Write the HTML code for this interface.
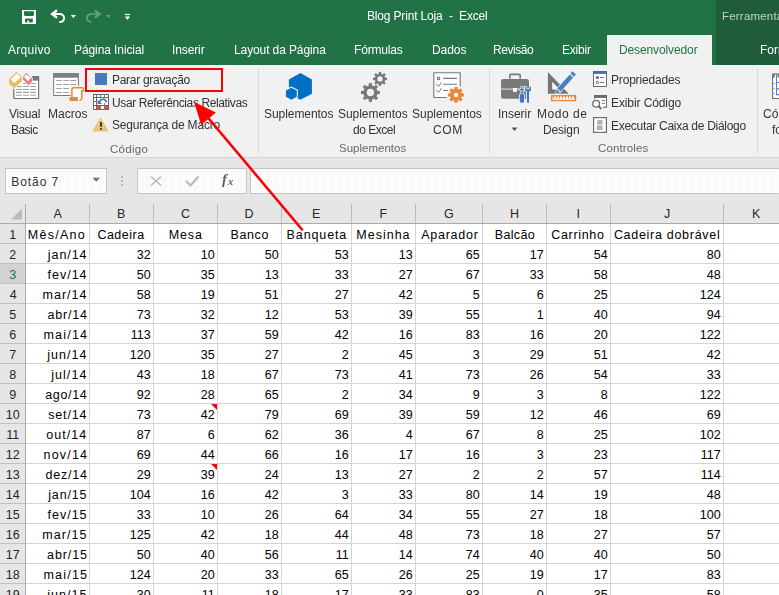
<!DOCTYPE html>
<html><head><meta charset="utf-8"><style>
html,body{margin:0;padding:0;}
body{width:779px;height:595px;overflow:hidden;position:relative;background:#fff;font-family:"Liberation Sans", sans-serif;}
body>div{position:absolute;box-sizing:content-box;}
.t{white-space:pre;line-height:1px;height:1px;}
.g{will-change:transform;}
</style></head><body>
<div style="left:0px;top:0px;width:779px;height:65px;background:#217346;"></div>
<div style="left:716px;top:0px;width:63px;height:65px;background:#1e5c3a;"></div>
<div style="left:607px;top:35px;width:105px;height:30px;background:#f1f1f1;"></div>
<svg style="position:absolute;left:15px;top:5px" width="125" height="25" viewBox="15 5 125 25">
<rect x="22" y="10" width="14" height="14" fill="#fff"/>
<path d="M24 11.2 H34 V15 L33 16 H25 L24 15 Z" fill="#217346"/>
<rect x="25" y="18.6" width="7.8" height="3.8" fill="#217346"/>
<rect x="27.2" y="20.6" width="1.9" height="1.8" fill="#fff"/>
<path d="M57 10.3 L52.2 14 L57 17.7" fill="none" stroke="#fff" stroke-width="2.4"/>
<path d="M52.5 14 H59.5 C65.5 14 65.8 21.8 59.3 22" fill="none" stroke="#fff" stroke-width="1.9"/>
<path d="M70.8 15 H76 L73.4 18 Z" fill="#fff"/>
<g opacity="0.3">
<path d="M94.8 10.6 L99.6 14.1 L94.8 17.6" fill="none" stroke="#fff" stroke-width="2.4"/>
<path d="M99.3 14.1 H91.5 C85.5 14.1 85.2 21.8 91.5 21.9" fill="none" stroke="#fff" stroke-width="1.9"/>
<path d="M106 15 H111 L108.5 18 Z" fill="#fff"/>
</g>
<rect x="124.8" y="13.9" width="5.3" height="1.2" fill="#fff"/>
<path d="M124.8 16.6 H130.1 L127.45 20.1 Z" fill="#fff"/>
</svg>
<div class="t g" style="left:366.70px;top:15.95px;font-size:12px;color:#ffffff;letter-spacing:-0.167px;">Blog Print Loja  -  Excel</div>
<div class="t g" style="left:721.60px;top:15.95px;font-size:11.5px;color:#c2d6c8;letter-spacing:0.200px;">Ferramentas de Desenho</div>
<div class="t g" style="left:8.00px;top:49.95px;font-size:12px;color:#ffffff;letter-spacing:0.283px;">Arquivo</div>
<div class="t g" style="left:73.70px;top:49.95px;font-size:12px;color:#ffffff;letter-spacing:-0.092px;">Página Inicial</div>
<div class="t g" style="left:172.40px;top:49.95px;font-size:12px;color:#ffffff;letter-spacing:-0.117px;">Inserir</div>
<div class="t g" style="left:233.50px;top:49.95px;font-size:12px;color:#ffffff;letter-spacing:-0.107px;">Layout da Página</div>
<div class="t g" style="left:354.00px;top:49.95px;font-size:12px;color:#ffffff;letter-spacing:-0.186px;">Fórmulas</div>
<div class="t g" style="left:431.50px;top:49.95px;font-size:12px;color:#ffffff;letter-spacing:-0.075px;">Dados</div>
<div class="t g" style="left:493.20px;top:49.95px;font-size:12px;color:#ffffff;letter-spacing:-0.433px;">Revisão</div>
<div class="t g" style="left:562.00px;top:49.95px;font-size:12px;color:#ffffff;letter-spacing:-0.200px;">Exibir</div>
<div class="t g" style="left:619.40px;top:49.95px;font-size:12px;color:#217346;letter-spacing:-0.117px;">Desenvolvedor</div>
<div class="t g" style="left:760.40px;top:49.95px;font-size:12px;color:#ffffff;">Formatar</div>
<div style="left:0px;top:65px;width:779px;height:92px;background:#f1f1f1;"></div>
<div style="left:0px;top:157px;width:779px;height:1px;background:#d4d4d4;"></div>
<div style="left:0px;top:158px;width:779px;height:46px;background:#e6e6e6;"></div>
<div style="left:258px;top:69px;width:1px;height:84px;background:#d8d8d8;"></div>
<div style="left:489px;top:69px;width:1px;height:84px;background:#d8d8d8;"></div>
<div style="left:757px;top:69px;width:1px;height:84px;background:#d8d8d8;"></div>
<svg style="position:absolute;left:5px;top:68px" width="38" height="34" viewBox="5 68 38 34">
<path d="M13.9 88.8 V98.5 H38.6 V76.7 H32.3" fill="#fff" stroke="#707070" stroke-width="1"/>
<path d="M13.9 80 H32.3 V76.7 H38.6 V98.5 H13.9 Z" fill="#fff"/>
<path d="M13.9 88.8 V98.5 H38.6 V76.7 H32.3" fill="none" stroke="#707070" stroke-width="1"/>
<rect x="32.3" y="76.2" width="6.8" height="4.4" fill="#787878"/>
<g stroke="#a0a0a0" stroke-width="1.1">
<path d="M23.1 83.5h5.8 M30.1 83.5h5.8 M16 86.5h5.9 M23.1 86.5h5.8 M30.1 86.5h5.8 M16 89.5h5.9 M23.1 89.5h5.8 M30.1 89.5h5.8 M16 92.4h5.9 M23.1 92.4h5.8 M30.1 92.4h5.8 M16 95.3h5.9 M23.1 95.3h5.8 M30.1 95.3h5.8"/>
</g>
<path d="M16.5 72 L21.9 77 V81.3 L14.6 88 L9.1 84.3 V79.1 Z" fill="#e8bc66" stroke="#f4f4f4" stroke-width="1.2" paint-order="stroke"/>
<path d="M16.5 73.6 L20.8 77.3 L14.3 82.9 L10.6 79.4 Z" fill="#fff"/>
<path d="M26.3 73.1 L32.1 78.6 V81.6 L28.5 85.3 L23.1 79.4 V76.7 Z" fill="#e17b8e" stroke="#f4f4f4" stroke-width="1.2" paint-order="stroke"/>
<path d="M26.3 74.6 L31 78.1 L27.8 81.3 L24 76.7 Z" fill="#fff"/>
</svg>
<div class="t g" style="left:9.00px;top:113.95px;font-size:12px;color:#333333;letter-spacing:-0.200px;">Visual</div>
<div class="t g" style="left:10.50px;top:129.95px;font-size:12px;color:#333333;letter-spacing:-0.550px;">Basic</div>
<svg style="position:absolute;left:48px;top:68px" width="40" height="36" viewBox="48 68 40 36">
<rect x="53.7" y="73.7" width="24.7" height="21.8" fill="#fff" stroke="#7a7a7a" stroke-width="1"/>
<rect x="53.2" y="73.2" width="25.7" height="4.5" fill="#7f7f7f"/>
<g stroke="#a0a0a0" stroke-width="1.1">
<path d="M56.2 80.5h5.6 M63.2 80.5h5.7 M70.1 80.5h5.9 M56.2 84.5h5.6 M63.2 84.5h5.7 M70.1 84.5h5.9 M56.2 88.5h5.6 M63.2 88.5h5.7 M56.2 92.5h5.6 M63.2 92.5h5.7"/>
</g>
<path d="M70.5 86 H83 Q85 86 85 89 V92 H82.5 V101.8 H68.5 V96 H70.5 Z" fill="#f4f4f4"/>
<path d="M71.9 97.5 V89.5 Q71.9 87.7 73.7 87.7 H82 Q84 87.7 83.3 90.7 H81.8 V98.5 Q81.5 100.2 79.5 100.2" fill="#fff" stroke="#e8883a" stroke-width="1.5"/>
<path d="M70.7 97 H77.9 V100.9 H70.7 Q69.2 100.9 69.2 99 Q69.2 97 70.7 97 Z" fill="#e8883a"/>
</svg>
<div class="t g" style="left:47.70px;top:113.95px;font-size:12px;color:#333333;letter-spacing:0.040px;">Macros</div>
<div style="left:85px;top:68px;width:134px;height:20px;border:2px solid #ff0000;"></div>
<div style="left:95px;top:73px;width:12px;height:12px;background:#4a7ab5;"></div>
<div class="t g" style="left:111.50px;top:79.95px;font-size:12px;color:#333333;letter-spacing:-0.292px;">Parar gravação</div>
<svg style="position:absolute;left:91px;top:92px" width="20" height="20" viewBox="91 92 20 20">
<rect x="93.5" y="94.5" width="15" height="15" fill="#fff" stroke="#666" stroke-width="1"/>
<path d="M93 97.5 H109 M96.5 94 V110 M93 105.5 H109" stroke="#666" stroke-width="1"/>
<path d="M100.5 94 V98.5 M104.5 94 V98.5 M93 101.5 H96 M100.5 106 V110 M104.5 103 V110" stroke="#7a7a7a" stroke-width="1"/>
<rect x="97" y="106" width="3" height="3" fill="#e0502a"/>
<rect x="105" y="106" width="3" height="3" fill="#e0502a"/>
<path d="M106.4 102.5 C105.8 98.6 101.5 98 98.8 102.4" stroke="#3c78c0" stroke-width="1.5" fill="none"/>
<path d="M97.6 99.6 V104 H102 Z" fill="#3c78c0"/>
</svg>
<div class="t g" style="left:111.50px;top:102.95px;font-size:12px;color:#333333;letter-spacing:-0.388px;">Usar Referências Relativas</div>
<svg style="position:absolute;left:90px;top:115px" width="22" height="20" viewBox="90 115 22 20">
<path d="M100.5 118.6 L107.8 131 H93.2 Z" fill="#eec27a" stroke="#eec27a" stroke-width="1.2" stroke-linejoin="round"/>
<rect x="100" y="122" width="2" height="4.8" fill="#3a3f4a"/>
<rect x="100" y="128.2" width="2" height="1.7" fill="#3a3f4a"/>
</svg>
<div class="t g" style="left:111.50px;top:124.95px;font-size:12px;color:#333333;letter-spacing:-0.188px;">Segurança de Macro</div>
<div class="t g" style="left:109.60px;top:148.95px;font-size:11.5px;color:#666666;letter-spacing:0.300px;">Código</div>
<svg style="position:absolute;left:280px;top:70px" width="36" height="34" viewBox="280 70 36 34">
<path d="M300.4 73.1 L311.9 79.5 V93.7 L300.4 99.8 L288.9 93.7 V79.5 Z" fill="#0070c6"/>
<path d="M291.4 87.7 L296.8 90.4 V96.8 L291.4 99.8 L285.9 96.8 V90.4 Z" fill="#0070c6" stroke="#f4f4f4" stroke-width="2.2" paint-order="stroke"/>
</svg>
<div class="t g" style="left:264.40px;top:113.95px;font-size:12px;color:#333333;letter-spacing:-0.060px;">Suplementos</div>
<svg style="position:absolute;left:355px;top:68px" width="40" height="40" viewBox="355 68 40 40"><g fill="#787878"><circle cx="370.4" cy="92.5" r="7.2"/><rect x="368.85" y="83.10" width="3.10" height="3.70" transform="rotate(0 370.4 92.5)"/><rect x="368.85" y="83.10" width="3.10" height="3.70" transform="rotate(45 370.4 92.5)"/><rect x="368.85" y="83.10" width="3.10" height="3.70" transform="rotate(90 370.4 92.5)"/><rect x="368.85" y="83.10" width="3.10" height="3.70" transform="rotate(135 370.4 92.5)"/><rect x="368.85" y="83.10" width="3.10" height="3.70" transform="rotate(180 370.4 92.5)"/><rect x="368.85" y="83.10" width="3.10" height="3.70" transform="rotate(225 370.4 92.5)"/><rect x="368.85" y="83.10" width="3.10" height="3.70" transform="rotate(270 370.4 92.5)"/><rect x="368.85" y="83.10" width="3.10" height="3.70" transform="rotate(315 370.4 92.5)"/></g><circle cx="370.4" cy="92.5" r="3.7" fill="#f1f1f1"/><g fill="#787878"><circle cx="380" cy="78.9" r="5.2"/><rect x="378.75" y="71.90" width="2.50" height="3.30" transform="rotate(0 380 78.9)"/><rect x="378.75" y="71.90" width="2.50" height="3.30" transform="rotate(45 380 78.9)"/><rect x="378.75" y="71.90" width="2.50" height="3.30" transform="rotate(90 380 78.9)"/><rect x="378.75" y="71.90" width="2.50" height="3.30" transform="rotate(135 380 78.9)"/><rect x="378.75" y="71.90" width="2.50" height="3.30" transform="rotate(180 380 78.9)"/><rect x="378.75" y="71.90" width="2.50" height="3.30" transform="rotate(225 380 78.9)"/><rect x="378.75" y="71.90" width="2.50" height="3.30" transform="rotate(270 380 78.9)"/><rect x="378.75" y="71.90" width="2.50" height="3.30" transform="rotate(315 380 78.9)"/></g><circle cx="380" cy="78.9" r="2.7" fill="#f1f1f1"/></svg>
<div class="t g" style="left:338.20px;top:113.95px;font-size:12px;color:#333333;letter-spacing:-0.040px;">Suplementos</div>
<div class="t g" style="left:352.50px;top:129.95px;font-size:12px;color:#333333;letter-spacing:-0.471px;">do Excel</div>
<svg style="position:absolute;left:428px;top:68px" width="44" height="36" viewBox="428 68 44 36">
<path d="M446.8 97.5 H433.8 V72.7 H460.2 V86.5" fill="#fff" stroke="#777" stroke-width="1.1"/>
<rect x="437.4" y="77.4" width="2.2" height="2.2" fill="none" stroke="#777" stroke-width="1"/>
<path d="M443.1 78.4h13.8 M443.1 84.3h13.8 M443.1 90.5h5.8" stroke="#777" stroke-width="1.1"/>
<path d="M436.3 83.8 l2.2 2.6 l3 -4.2 M436.3 89.8 l2.2 2.6 l3 -4.2" stroke="#777" stroke-width="1" fill="none"/>
<g fill="#f8f8f8" stroke="#f8f8f8" stroke-width="2.4"><circle cx="456" cy="94.9" r="6.1"/><rect x="454.35" y="87.00" width="3.30" height="3.30" transform="rotate(0 456 94.9)"/><rect x="454.35" y="87.00" width="3.30" height="3.30" transform="rotate(45 456 94.9)"/><rect x="454.35" y="87.00" width="3.30" height="3.30" transform="rotate(90 456 94.9)"/><rect x="454.35" y="87.00" width="3.30" height="3.30" transform="rotate(135 456 94.9)"/><rect x="454.35" y="87.00" width="3.30" height="3.30" transform="rotate(180 456 94.9)"/><rect x="454.35" y="87.00" width="3.30" height="3.30" transform="rotate(225 456 94.9)"/><rect x="454.35" y="87.00" width="3.30" height="3.30" transform="rotate(270 456 94.9)"/><rect x="454.35" y="87.00" width="3.30" height="3.30" transform="rotate(315 456 94.9)"/></g><g fill="#e8883a"><circle cx="456" cy="94.9" r="6.1"/><rect x="454.35" y="87.00" width="3.30" height="3.30" transform="rotate(0 456 94.9)"/><rect x="454.35" y="87.00" width="3.30" height="3.30" transform="rotate(45 456 94.9)"/><rect x="454.35" y="87.00" width="3.30" height="3.30" transform="rotate(90 456 94.9)"/><rect x="454.35" y="87.00" width="3.30" height="3.30" transform="rotate(135 456 94.9)"/><rect x="454.35" y="87.00" width="3.30" height="3.30" transform="rotate(180 456 94.9)"/><rect x="454.35" y="87.00" width="3.30" height="3.30" transform="rotate(225 456 94.9)"/><rect x="454.35" y="87.00" width="3.30" height="3.30" transform="rotate(270 456 94.9)"/><rect x="454.35" y="87.00" width="3.30" height="3.30" transform="rotate(315 456 94.9)"/></g><circle cx="456" cy="94.9" r="2.2" fill="#fff"/></svg>
<div class="t g" style="left:411.90px;top:113.95px;font-size:12px;color:#333333;letter-spacing:-0.020px;">Suplementos</div>
<div class="t g" style="left:433.30px;top:129.95px;font-size:12px;color:#333333;letter-spacing:0.650px;">COM</div>
<div class="t g" style="left:339.30px;top:147.95px;font-size:11.5px;color:#666666;letter-spacing:0.010px;">Suplementos</div>
<svg style="position:absolute;left:496px;top:70px" width="40" height="36" viewBox="496 70 40 36">
<path d="M509.8 78.8 V75.6 Q509.8 74.4 511 74.4 H519 Q520.2 74.4 520.2 75.6 V78.8" fill="none" stroke="#7a7a7a" stroke-width="1.6"/>
<rect x="501" y="79" width="28" height="19.7" rx="2.2" fill="#7a7a7a"/>
<rect x="501" y="88.6" width="18" height="0.9" fill="#f1f1f1"/>
<rect x="513" y="88" width="4" height="3.8" fill="#fff"/>
<g stroke="#f4f4f4" stroke-width="1.6" paint-order="stroke" fill="#3c78c0" stroke-linejoin="round">
<path d="M521.3 86.8 H522.7 V89 H524 V90 H522.7 V94.2 H523 Q524.2 94.2 524.2 95.5 V101.3 Q524.2 102.7 522.8 102.7 H521.2 Q519.8 102.7 519.8 101.3 V95.5 Q519.8 94.2 521 94.2 H521.3 V90 H520 V89 H521.3 Z"/>
<path d="M525 86.8 H526.3 V89.2 H529.7 V86.8 H531 V89.8 Q531 91.2 529 91.6 V102.7 H527 V91.6 Q525 91.2 525 89.8 Z"/>
</g>
</svg>
<div class="t g" style="left:498.30px;top:113.95px;font-size:12px;color:#333333;letter-spacing:-0.017px;">Inserir</div>
<svg style="position:absolute;left:511px;top:127px" width="8" height="5" viewBox="0 0 8 5"><path d="M0.5 0.5 L6.5 0.5 L3.5 4 Z" fill="#555"/></svg>
<svg style="position:absolute;left:544px;top:68px" width="40" height="36" viewBox="544 68 40 36">
<path d="M547.9 71.9 V93.7 H568.8 Z" fill="#767676"/>
<path d="M552.2 81.8 V89.5 H559.5 Z" fill="#f8f8f8"/>
<g stroke="#f1f1f1" stroke-width="1.2" paint-order="stroke" fill="#4a7fc0">
<polygon points="555.90,93.50 560.01,92.33 556.57,89.28"/><polygon points="560.67,91.59 573.22,77.45 569.78,74.39 557.23,88.53"/><polygon points="573.95,76.63 575.95,74.38 572.51,71.33 570.51,73.57"/>
</g>
<rect x="551.7" y="95.7" width="23.8" height="4.8" fill="#fff" stroke="#e8883a" stroke-width="1.4"/>
<path d="M553.5 95.5v3 M556.5 95.5v3 M559.5 95.5v3 M562.5 95.5v3 M565.5 95.5v3 M568.5 95.5v3 M571.5 95.5v3 M574.5 95.5v3" stroke="#e8883a" stroke-width="1.1"/>
</svg>
<div class="t g" style="left:537.30px;top:113.95px;font-size:12px;color:#333333;letter-spacing:0.533px;">Modo de</div>
<div class="t g" style="left:543.30px;top:129.95px;font-size:12px;color:#333333;letter-spacing:-0.160px;">Design</div>
<svg style="position:absolute;left:590px;top:68px" width="20" height="22" viewBox="590 68 20 22">
<rect x="593.5" y="71.5" width="13" height="15" fill="#fff" stroke="#6b6b6b" stroke-width="1"/>
<rect x="593" y="71" width="14" height="2.9" fill="#3d72b5"/>
<circle cx="597.4" cy="77.5" r="1.6" fill="#666"/>
<circle cx="597.4" cy="82.5" r="1.3" fill="none" stroke="#666" stroke-width="1"/>
<path d="M600.1 77.5h3.8 M600.1 82.5h3.8" stroke="#666" stroke-width="1.1"/>
</svg>
<div class="t g" style="left:610.60px;top:79.95px;font-size:12px;color:#333333;letter-spacing:-0.182px;">Propriedades</div>
<svg style="position:absolute;left:589px;top:92px" width="21" height="20" viewBox="589 92 21 20">
<path d="M594.5 98.7 V95.5 H606.5 V107.2 H603.1" fill="#fff" stroke="#6b6b6b" stroke-width="1"/>
<path d="M594.5 98.7 V95.5 H606.5 V107.2 H595 Z" fill="#fff"/>
<path d="M594.5 98.7 V95.5 H606.5 V107.2 H603.1" fill="none" stroke="#6b6b6b" stroke-width="1"/>
<rect x="594" y="95" width="13" height="2.9" fill="#6b6b6b"/>
<path d="M601.9 100.5h3 M601.9 103.3h3" stroke="#777" stroke-width="1"/>
<circle cx="596.1" cy="103.7" r="3.4" fill="none" stroke="#f4f4f4" stroke-width="3"/>
<path d="M598.9 106.5 L601.3 109" stroke="#f4f4f4" stroke-width="3.5"/>
<circle cx="596.1" cy="103.7" r="3.4" fill="#fff" stroke="#6b6b6b" stroke-width="1.3"/>
<path d="M598.7 106.3 L601.3 109" stroke="#6b6b6b" stroke-width="2"/>
</svg>
<div class="t g" style="left:610.60px;top:102.95px;font-size:12px;color:#333333;letter-spacing:-0.100px;">Exibir Código</div>
<svg style="position:absolute;left:590px;top:114px" width="20" height="22" viewBox="590 114 20 22">
<rect x="593.6" y="117.6" width="12.8" height="14.8" fill="#fff" stroke="#6b6b6b" stroke-width="1.2"/>
<path d="M597.5 120 H602.5 V130 H596.5 Z" fill="#b0b0b0"/>
<rect x="596.8" y="124.5" width="6" height="0.9" fill="#fff"/>
<path d="M600 117.6 v1.2 M600 131.2 v1.2" stroke="#fff" stroke-width="1"/>
</svg>
<div class="t g" style="left:610.60px;top:125.95px;font-size:12px;color:#333333;letter-spacing:-0.292px;">Executar Caixa de Diálogo</div>
<div class="t g" style="left:597.70px;top:147.95px;font-size:11.5px;color:#666666;letter-spacing:0.138px;">Controles</div>
<svg style="position:absolute;left:768px;top:70px" width="11" height="32" viewBox="768 70 11 32">
<rect x="772.6" y="74" width="10" height="24.5" fill="#fff" stroke="#707070" stroke-width="1.1"/>
<rect x="772.2" y="74" width="2.6" height="3.6" fill="#777"/>
<rect x="777.6" y="74" width="3" height="3.6" fill="#777"/>
<path d="M776.5 74 V94.6 H781 M776.5 82.5 H781 M776.5 88.9 H781" stroke="#4a86c8" stroke-width="1.1" fill="none"/>
<path d="M773.3 83.5h1.6 M773.3 88.5h1.6 M773.3 93.5h1.6" stroke="#999" stroke-width="0.9"/>
</svg>
<div class="t g" style="left:763.30px;top:113.95px;font-size:12px;color:#333333;">Có</div>
<div class="t g" style="left:772.30px;top:129.95px;font-size:12px;color:#333333;">fo</div>
<div style="left:5px;top:168px;width:100px;height:24px;background:repeating-conic-gradient(#f7f7f7 0 25%,#ffffff 0 50%) 0 0/2px 2px;border:1px solid #c6c6c6;"></div>
<div class="t" style="left:11.20px;top:181.95px;font-size:12px;color:#333;letter-spacing:0.950px;">Botão 7</div>
<svg style="position:absolute;left:92px;top:177px" width="9" height="6" viewBox="0 0 9 6"><path d="M0.5 0.8 L8 0.8 L4.25 4.8 Z" fill="#707070"/></svg>
<div style="left:121px;top:175.5px;width:2px;height:2px;background:#b8b8b8;"></div>
<div style="left:121px;top:179.5px;width:2px;height:2px;background:#b8b8b8;"></div>
<div style="left:121px;top:183.5px;width:2px;height:2px;background:#b8b8b8;"></div>
<div style="left:137px;top:168px;width:108px;height:24px;background:repeating-conic-gradient(#f7f7f7 0 25%,#ffffff 0 50%) 0 0/2px 2px;border:1px solid #c6c6c6;"></div>
<div style="left:250px;top:168px;width:540px;height:24px;background:repeating-conic-gradient(#f7f7f7 0 25%,#ffffff 0 50%) 0 0/2px 2px;border:1px solid #c6c6c6;"></div>
<svg style="position:absolute;left:149px;top:175px" width="14" height="12" viewBox="0 0 14 12"><path d="M2 1.5 L12 10.5 M12 1.5 L2 10.5" stroke="#b9b9b9" stroke-width="1.6"/></svg>
<svg style="position:absolute;left:184px;top:175px" width="16" height="12" viewBox="0 0 16 12"><path d="M2 6 L6.5 10.5 L14.5 1.5" stroke="#b9b9b9" stroke-width="2.2" fill="none"/></svg>
<div class="t g" style="left:222.00px;top:178.95px;font-size:15px;color:#606060;font-family:'Liberation Serif';font-style:italic;font-weight:bold;">f</div>
<div class="t g" style="left:227.60px;top:180.95px;font-size:10.5px;color:#606060;font-family:'Liberation Serif';font-style:italic;font-weight:bold;">x</div>
<div style="left:0px;top:204px;width:779px;height:19px;background:#e6e6e6;"></div>
<div style="left:0px;top:224px;width:25px;height:371px;background:#e6e6e6;"></div>
<div style="left:0px;top:264px;width:25px;height:19px;background:#d2d2d2;"></div>
<div style="left:26px;top:224px;width:753px;height:371px;background:#ffffff;"></div>
<div style="left:26px;top:243px;width:753px;height:1px;background:#d4d4d4;"></div>
<div style="left:0px;top:243px;width:25px;height:1px;background:#c0c0c0;"></div>
<div style="left:26px;top:263px;width:753px;height:1px;background:#d4d4d4;"></div>
<div style="left:0px;top:263px;width:25px;height:1px;background:#c0c0c0;"></div>
<div style="left:26px;top:283px;width:753px;height:1px;background:#d4d4d4;"></div>
<div style="left:0px;top:283px;width:25px;height:1px;background:#c0c0c0;"></div>
<div style="left:26px;top:303px;width:753px;height:1px;background:#d4d4d4;"></div>
<div style="left:0px;top:303px;width:25px;height:1px;background:#c0c0c0;"></div>
<div style="left:26px;top:323px;width:753px;height:1px;background:#d4d4d4;"></div>
<div style="left:0px;top:323px;width:25px;height:1px;background:#c0c0c0;"></div>
<div style="left:26px;top:343px;width:753px;height:1px;background:#d4d4d4;"></div>
<div style="left:0px;top:343px;width:25px;height:1px;background:#c0c0c0;"></div>
<div style="left:26px;top:363px;width:753px;height:1px;background:#d4d4d4;"></div>
<div style="left:0px;top:363px;width:25px;height:1px;background:#c0c0c0;"></div>
<div style="left:26px;top:383px;width:753px;height:1px;background:#d4d4d4;"></div>
<div style="left:0px;top:383px;width:25px;height:1px;background:#c0c0c0;"></div>
<div style="left:26px;top:403px;width:753px;height:1px;background:#d4d4d4;"></div>
<div style="left:0px;top:403px;width:25px;height:1px;background:#c0c0c0;"></div>
<div style="left:26px;top:423px;width:753px;height:1px;background:#d4d4d4;"></div>
<div style="left:0px;top:423px;width:25px;height:1px;background:#c0c0c0;"></div>
<div style="left:26px;top:443px;width:753px;height:1px;background:#d4d4d4;"></div>
<div style="left:0px;top:443px;width:25px;height:1px;background:#c0c0c0;"></div>
<div style="left:26px;top:463px;width:753px;height:1px;background:#d4d4d4;"></div>
<div style="left:0px;top:463px;width:25px;height:1px;background:#c0c0c0;"></div>
<div style="left:26px;top:483px;width:753px;height:1px;background:#d4d4d4;"></div>
<div style="left:0px;top:483px;width:25px;height:1px;background:#c0c0c0;"></div>
<div style="left:26px;top:503px;width:753px;height:1px;background:#d4d4d4;"></div>
<div style="left:0px;top:503px;width:25px;height:1px;background:#c0c0c0;"></div>
<div style="left:26px;top:523px;width:753px;height:1px;background:#d4d4d4;"></div>
<div style="left:0px;top:523px;width:25px;height:1px;background:#c0c0c0;"></div>
<div style="left:26px;top:543px;width:753px;height:1px;background:#d4d4d4;"></div>
<div style="left:0px;top:543px;width:25px;height:1px;background:#c0c0c0;"></div>
<div style="left:26px;top:563px;width:753px;height:1px;background:#d4d4d4;"></div>
<div style="left:0px;top:563px;width:25px;height:1px;background:#c0c0c0;"></div>
<div style="left:26px;top:583px;width:753px;height:1px;background:#d4d4d4;"></div>
<div style="left:0px;top:583px;width:25px;height:1px;background:#c0c0c0;"></div>
<div style="left:26px;top:603px;width:753px;height:1px;background:#d4d4d4;"></div>
<div style="left:0px;top:603px;width:25px;height:1px;background:#c0c0c0;"></div>
<div style="left:0px;top:223px;width:779px;height:1px;background:#ababab;"></div>
<div style="left:89px;top:224px;width:1px;height:371px;background:#d4d4d4;"></div>
<div style="left:89px;top:204px;width:1px;height:19px;background:#bdbdbd;"></div>
<div style="left:153px;top:224px;width:1px;height:371px;background:#d4d4d4;"></div>
<div style="left:153px;top:204px;width:1px;height:19px;background:#bdbdbd;"></div>
<div style="left:217px;top:224px;width:1px;height:371px;background:#d4d4d4;"></div>
<div style="left:217px;top:204px;width:1px;height:19px;background:#bdbdbd;"></div>
<div style="left:281px;top:224px;width:1px;height:371px;background:#d4d4d4;"></div>
<div style="left:281px;top:204px;width:1px;height:19px;background:#bdbdbd;"></div>
<div style="left:351px;top:224px;width:1px;height:371px;background:#d4d4d4;"></div>
<div style="left:351px;top:204px;width:1px;height:19px;background:#bdbdbd;"></div>
<div style="left:415px;top:224px;width:1px;height:371px;background:#d4d4d4;"></div>
<div style="left:415px;top:204px;width:1px;height:19px;background:#bdbdbd;"></div>
<div style="left:482px;top:224px;width:1px;height:371px;background:#d4d4d4;"></div>
<div style="left:482px;top:204px;width:1px;height:19px;background:#bdbdbd;"></div>
<div style="left:546px;top:224px;width:1px;height:371px;background:#d4d4d4;"></div>
<div style="left:546px;top:204px;width:1px;height:19px;background:#bdbdbd;"></div>
<div style="left:610px;top:224px;width:1px;height:371px;background:#d4d4d4;"></div>
<div style="left:610px;top:204px;width:1px;height:19px;background:#bdbdbd;"></div>
<div style="left:723px;top:224px;width:1px;height:371px;background:#d4d4d4;"></div>
<div style="left:723px;top:204px;width:1px;height:19px;background:#bdbdbd;"></div>
<div style="left:25px;top:204px;width:1px;height:391px;background:#ababab;"></div>
<svg style="position:absolute;left:8px;top:207px" width="16" height="14" viewBox="0 0 16 14"><path d="M14 1.5 L14 12.5 L3 12.5 Z" fill="#bcbcbc"/></svg>
<div class="t" style="left:53.50px;top:213.95px;font-size:12.5px;color:#262626;">A</div>
<div class="t" style="left:117.00px;top:213.95px;font-size:12.5px;color:#262626;">B</div>
<div class="t" style="left:181.00px;top:213.95px;font-size:12.5px;color:#262626;">C</div>
<div class="t" style="left:244.50px;top:213.95px;font-size:12.5px;color:#262626;">D</div>
<div class="t" style="left:312.00px;top:213.95px;font-size:12.5px;color:#262626;">E</div>
<div class="t" style="left:379.50px;top:213.95px;font-size:12.5px;color:#262626;">F</div>
<div class="t" style="left:444.00px;top:213.95px;font-size:12.5px;color:#262626;">G</div>
<div class="t" style="left:510.00px;top:213.95px;font-size:12.5px;color:#262626;">H</div>
<div class="t" style="left:576.50px;top:213.95px;font-size:12.5px;color:#262626;">I</div>
<div class="t" style="left:664.00px;top:213.95px;font-size:12.5px;color:#262626;">J</div>
<div class="t" style="left:752.00px;top:213.95px;font-size:12.5px;color:#262626;">K</div>
<div class="t" style="left:9.30px;top:234.95px;font-size:12.5px;color:#262626;">1</div>
<div class="t" style="left:27.75px;top:234.95px;font-size:12.5px;color:#000;letter-spacing:1.283px;">Mês/Ano</div>
<div class="t" style="left:97.40px;top:234.95px;font-size:12.5px;color:#000;letter-spacing:0.500px;">Cadeira</div>
<div class="t" style="left:168.80px;top:234.95px;font-size:12.5px;color:#000;letter-spacing:0.833px;">Mesa</div>
<div class="t" style="left:230.50px;top:234.95px;font-size:12.5px;color:#000;letter-spacing:0.600px;">Banco</div>
<div class="t" style="left:286.60px;top:234.95px;font-size:12.5px;color:#000;letter-spacing:0.886px;">Banqueta</div>
<div class="t" style="left:356.30px;top:234.95px;font-size:12.5px;color:#000;letter-spacing:1.000px;">Mesinha</div>
<div class="t" style="left:421.30px;top:234.95px;font-size:12.5px;color:#000;letter-spacing:0.729px;">Aparador</div>
<div class="t" style="left:494.70px;top:234.95px;font-size:12.5px;color:#000;letter-spacing:0.360px;">Balcão</div>
<div class="t" style="left:551.30px;top:234.95px;font-size:12.5px;color:#000;letter-spacing:0.671px;">Carrinho</div>
<div class="t" style="left:613.90px;top:234.95px;font-size:12.5px;color:#000;letter-spacing:0.707px;">Cadeira dobrável</div>
<div class="t" style="left:9.30px;top:254.95px;font-size:12.5px;color:#262626;">2</div>
<div class="t" style="left:47.80px;top:254.95px;font-size:12.5px;color:#000;letter-spacing:0.940px;">jan/14</div>
<div class="t" style="left:136.75px;top:254.95px;font-size:12.5px;color:#000;">32</div>
<div class="t" style="left:200.75px;top:254.95px;font-size:12.5px;color:#000;">10</div>
<div class="t" style="left:264.75px;top:254.95px;font-size:12.5px;color:#000;">50</div>
<div class="t" style="left:334.75px;top:254.95px;font-size:12.5px;color:#000;">53</div>
<div class="t" style="left:398.75px;top:254.95px;font-size:12.5px;color:#000;">13</div>
<div class="t" style="left:465.75px;top:254.95px;font-size:12.5px;color:#000;">65</div>
<div class="t" style="left:529.75px;top:254.95px;font-size:12.5px;color:#000;">17</div>
<div class="t" style="left:593.75px;top:254.95px;font-size:12.5px;color:#000;">54</div>
<div class="t" style="left:706.75px;top:254.95px;font-size:12.5px;color:#000;">80</div>
<div class="t" style="left:9.30px;top:274.95px;font-size:12.5px;color:#217346;">3</div>
<div class="t" style="left:47.50px;top:274.95px;font-size:12.5px;color:#000;letter-spacing:1.000px;">fev/14</div>
<div class="t" style="left:136.75px;top:274.95px;font-size:12.5px;color:#000;">50</div>
<div class="t" style="left:200.75px;top:274.95px;font-size:12.5px;color:#000;">35</div>
<div class="t" style="left:264.75px;top:274.95px;font-size:12.5px;color:#000;">13</div>
<div class="t" style="left:334.75px;top:274.95px;font-size:12.5px;color:#000;">33</div>
<div class="t" style="left:398.75px;top:274.95px;font-size:12.5px;color:#000;">27</div>
<div class="t" style="left:465.75px;top:274.95px;font-size:12.5px;color:#000;">67</div>
<div class="t" style="left:529.75px;top:274.95px;font-size:12.5px;color:#000;">33</div>
<div class="t" style="left:593.75px;top:274.95px;font-size:12.5px;color:#000;">58</div>
<div class="t" style="left:706.75px;top:274.95px;font-size:12.5px;color:#000;">48</div>
<div class="t" style="left:9.80px;top:294.95px;font-size:12.5px;color:#262626;">4</div>
<div class="t" style="left:42.60px;top:294.95px;font-size:12.5px;color:#000;letter-spacing:0.980px;">mar/14</div>
<div class="t" style="left:136.75px;top:294.95px;font-size:12.5px;color:#000;">58</div>
<div class="t" style="left:200.75px;top:294.95px;font-size:12.5px;color:#000;">19</div>
<div class="t" style="left:264.75px;top:294.95px;font-size:12.5px;color:#000;">51</div>
<div class="t" style="left:334.75px;top:294.95px;font-size:12.5px;color:#000;">27</div>
<div class="t" style="left:398.75px;top:294.95px;font-size:12.5px;color:#000;">42</div>
<div class="t" style="left:472.75px;top:294.95px;font-size:12.5px;color:#000;">5</div>
<div class="t" style="left:536.75px;top:294.95px;font-size:12.5px;color:#000;">6</div>
<div class="t" style="left:593.75px;top:294.95px;font-size:12.5px;color:#000;">25</div>
<div class="t" style="left:699.75px;top:294.95px;font-size:12.5px;color:#000;">124</div>
<div class="t" style="left:9.30px;top:314.95px;font-size:12.5px;color:#262626;">5</div>
<div class="t" style="left:47.50px;top:314.95px;font-size:12.5px;color:#000;letter-spacing:0.800px;">abr/14</div>
<div class="t" style="left:136.75px;top:314.95px;font-size:12.5px;color:#000;">73</div>
<div class="t" style="left:200.75px;top:314.95px;font-size:12.5px;color:#000;">32</div>
<div class="t" style="left:264.75px;top:314.95px;font-size:12.5px;color:#000;">12</div>
<div class="t" style="left:334.75px;top:314.95px;font-size:12.5px;color:#000;">53</div>
<div class="t" style="left:398.75px;top:314.95px;font-size:12.5px;color:#000;">39</div>
<div class="t" style="left:465.75px;top:314.95px;font-size:12.5px;color:#000;">55</div>
<div class="t" style="left:536.75px;top:314.95px;font-size:12.5px;color:#000;">1</div>
<div class="t" style="left:593.75px;top:314.95px;font-size:12.5px;color:#000;">40</div>
<div class="t" style="left:706.75px;top:314.95px;font-size:12.5px;color:#000;">94</div>
<div class="t" style="left:9.30px;top:334.95px;font-size:12.5px;color:#262626;">6</div>
<div class="t" style="left:43.50px;top:334.95px;font-size:12.5px;color:#000;letter-spacing:1.200px;">mai/14</div>
<div class="t" style="left:130.75px;top:334.95px;font-size:12.5px;color:#000;">113</div>
<div class="t" style="left:200.75px;top:334.95px;font-size:12.5px;color:#000;">37</div>
<div class="t" style="left:264.75px;top:334.95px;font-size:12.5px;color:#000;">59</div>
<div class="t" style="left:334.75px;top:334.95px;font-size:12.5px;color:#000;">42</div>
<div class="t" style="left:398.75px;top:334.95px;font-size:12.5px;color:#000;">16</div>
<div class="t" style="left:465.75px;top:334.95px;font-size:12.5px;color:#000;">83</div>
<div class="t" style="left:529.75px;top:334.95px;font-size:12.5px;color:#000;">16</div>
<div class="t" style="left:593.75px;top:334.95px;font-size:12.5px;color:#000;">20</div>
<div class="t" style="left:699.75px;top:334.95px;font-size:12.5px;color:#000;">122</div>
<div class="t" style="left:9.30px;top:354.95px;font-size:12.5px;color:#262626;">7</div>
<div class="t" style="left:47.20px;top:354.95px;font-size:12.5px;color:#000;letter-spacing:1.060px;">jun/14</div>
<div class="t" style="left:129.75px;top:354.95px;font-size:12.5px;color:#000;">120</div>
<div class="t" style="left:200.75px;top:354.95px;font-size:12.5px;color:#000;">35</div>
<div class="t" style="left:264.75px;top:354.95px;font-size:12.5px;color:#000;">27</div>
<div class="t" style="left:341.75px;top:354.95px;font-size:12.5px;color:#000;">2</div>
<div class="t" style="left:398.75px;top:354.95px;font-size:12.5px;color:#000;">45</div>
<div class="t" style="left:472.75px;top:354.95px;font-size:12.5px;color:#000;">3</div>
<div class="t" style="left:529.75px;top:354.95px;font-size:12.5px;color:#000;">29</div>
<div class="t" style="left:593.75px;top:354.95px;font-size:12.5px;color:#000;">51</div>
<div class="t" style="left:706.75px;top:354.95px;font-size:12.5px;color:#000;">42</div>
<div class="t" style="left:9.30px;top:374.95px;font-size:12.5px;color:#262626;">8</div>
<div class="t" style="left:51.20px;top:374.95px;font-size:12.5px;color:#000;letter-spacing:1.060px;">jul/14</div>
<div class="t" style="left:136.75px;top:374.95px;font-size:12.5px;color:#000;">43</div>
<div class="t" style="left:200.75px;top:374.95px;font-size:12.5px;color:#000;">18</div>
<div class="t" style="left:264.75px;top:374.95px;font-size:12.5px;color:#000;">67</div>
<div class="t" style="left:334.75px;top:374.95px;font-size:12.5px;color:#000;">73</div>
<div class="t" style="left:398.75px;top:374.95px;font-size:12.5px;color:#000;">41</div>
<div class="t" style="left:465.75px;top:374.95px;font-size:12.5px;color:#000;">73</div>
<div class="t" style="left:529.75px;top:374.95px;font-size:12.5px;color:#000;">26</div>
<div class="t" style="left:593.75px;top:374.95px;font-size:12.5px;color:#000;">54</div>
<div class="t" style="left:706.75px;top:374.95px;font-size:12.5px;color:#000;">33</div>
<div class="t" style="left:9.30px;top:394.95px;font-size:12.5px;color:#262626;">9</div>
<div class="t" style="left:45.20px;top:394.95px;font-size:12.5px;color:#000;letter-spacing:0.660px;">ago/14</div>
<div class="t" style="left:136.75px;top:394.95px;font-size:12.5px;color:#000;">92</div>
<div class="t" style="left:200.75px;top:394.95px;font-size:12.5px;color:#000;">28</div>
<div class="t" style="left:264.75px;top:394.95px;font-size:12.5px;color:#000;">65</div>
<div class="t" style="left:341.75px;top:394.95px;font-size:12.5px;color:#000;">2</div>
<div class="t" style="left:398.75px;top:394.95px;font-size:12.5px;color:#000;">34</div>
<div class="t" style="left:472.75px;top:394.95px;font-size:12.5px;color:#000;">9</div>
<div class="t" style="left:536.75px;top:394.95px;font-size:12.5px;color:#000;">3</div>
<div class="t" style="left:600.75px;top:394.95px;font-size:12.5px;color:#000;">8</div>
<div class="t" style="left:699.75px;top:394.95px;font-size:12.5px;color:#000;">122</div>
<div class="t" style="left:5.80px;top:414.95px;font-size:12.5px;color:#262626;">10</div>
<div class="t" style="left:48.20px;top:414.95px;font-size:12.5px;color:#000;letter-spacing:0.860px;">set/14</div>
<div class="t" style="left:136.75px;top:414.95px;font-size:12.5px;color:#000;">73</div>
<div class="t" style="left:200.75px;top:414.95px;font-size:12.5px;color:#000;">42</div>
<div class="t" style="left:264.75px;top:414.95px;font-size:12.5px;color:#000;">79</div>
<div class="t" style="left:334.75px;top:414.95px;font-size:12.5px;color:#000;">69</div>
<div class="t" style="left:398.75px;top:414.95px;font-size:12.5px;color:#000;">39</div>
<div class="t" style="left:465.75px;top:414.95px;font-size:12.5px;color:#000;">59</div>
<div class="t" style="left:529.75px;top:414.95px;font-size:12.5px;color:#000;">12</div>
<div class="t" style="left:593.75px;top:414.95px;font-size:12.5px;color:#000;">46</div>
<div class="t" style="left:706.75px;top:414.95px;font-size:12.5px;color:#000;">69</div>
<div class="t" style="left:6.30px;top:434.95px;font-size:12.5px;color:#262626;">11</div>
<div class="t" style="left:46.20px;top:434.95px;font-size:12.5px;color:#000;letter-spacing:1.060px;">out/14</div>
<div class="t" style="left:136.75px;top:434.95px;font-size:12.5px;color:#000;">87</div>
<div class="t" style="left:207.75px;top:434.95px;font-size:12.5px;color:#000;">6</div>
<div class="t" style="left:264.75px;top:434.95px;font-size:12.5px;color:#000;">62</div>
<div class="t" style="left:334.75px;top:434.95px;font-size:12.5px;color:#000;">36</div>
<div class="t" style="left:405.75px;top:434.95px;font-size:12.5px;color:#000;">4</div>
<div class="t" style="left:465.75px;top:434.95px;font-size:12.5px;color:#000;">67</div>
<div class="t" style="left:536.75px;top:434.95px;font-size:12.5px;color:#000;">8</div>
<div class="t" style="left:593.75px;top:434.95px;font-size:12.5px;color:#000;">25</div>
<div class="t" style="left:699.75px;top:434.95px;font-size:12.5px;color:#000;">102</div>
<div class="t" style="left:5.80px;top:454.95px;font-size:12.5px;color:#262626;">12</div>
<div class="t" style="left:43.60px;top:454.95px;font-size:12.5px;color:#000;letter-spacing:1.180px;">nov/14</div>
<div class="t" style="left:136.75px;top:454.95px;font-size:12.5px;color:#000;">69</div>
<div class="t" style="left:200.75px;top:454.95px;font-size:12.5px;color:#000;">44</div>
<div class="t" style="left:264.75px;top:454.95px;font-size:12.5px;color:#000;">66</div>
<div class="t" style="left:334.75px;top:454.95px;font-size:12.5px;color:#000;">16</div>
<div class="t" style="left:398.75px;top:454.95px;font-size:12.5px;color:#000;">17</div>
<div class="t" style="left:465.75px;top:454.95px;font-size:12.5px;color:#000;">16</div>
<div class="t" style="left:536.75px;top:454.95px;font-size:12.5px;color:#000;">3</div>
<div class="t" style="left:593.75px;top:454.95px;font-size:12.5px;color:#000;">23</div>
<div class="t" style="left:700.75px;top:454.95px;font-size:12.5px;color:#000;">117</div>
<div class="t" style="left:5.80px;top:474.95px;font-size:12.5px;color:#262626;">13</div>
<div class="t" style="left:45.60px;top:474.95px;font-size:12.5px;color:#000;letter-spacing:0.780px;">dez/14</div>
<div class="t" style="left:136.75px;top:474.95px;font-size:12.5px;color:#000;">29</div>
<div class="t" style="left:200.75px;top:474.95px;font-size:12.5px;color:#000;">39</div>
<div class="t" style="left:264.75px;top:474.95px;font-size:12.5px;color:#000;">24</div>
<div class="t" style="left:334.75px;top:474.95px;font-size:12.5px;color:#000;">13</div>
<div class="t" style="left:398.75px;top:474.95px;font-size:12.5px;color:#000;">27</div>
<div class="t" style="left:472.75px;top:474.95px;font-size:12.5px;color:#000;">2</div>
<div class="t" style="left:536.75px;top:474.95px;font-size:12.5px;color:#000;">2</div>
<div class="t" style="left:593.75px;top:474.95px;font-size:12.5px;color:#000;">57</div>
<div class="t" style="left:700.75px;top:474.95px;font-size:12.5px;color:#000;">114</div>
<div class="t" style="left:5.80px;top:494.95px;font-size:12.5px;color:#262626;">14</div>
<div class="t" style="left:48.20px;top:494.95px;font-size:12.5px;color:#000;letter-spacing:0.860px;">jan/15</div>
<div class="t" style="left:129.75px;top:494.95px;font-size:12.5px;color:#000;">104</div>
<div class="t" style="left:200.75px;top:494.95px;font-size:12.5px;color:#000;">16</div>
<div class="t" style="left:264.75px;top:494.95px;font-size:12.5px;color:#000;">42</div>
<div class="t" style="left:341.75px;top:494.95px;font-size:12.5px;color:#000;">3</div>
<div class="t" style="left:398.75px;top:494.95px;font-size:12.5px;color:#000;">33</div>
<div class="t" style="left:465.75px;top:494.95px;font-size:12.5px;color:#000;">80</div>
<div class="t" style="left:529.75px;top:494.95px;font-size:12.5px;color:#000;">14</div>
<div class="t" style="left:593.75px;top:494.95px;font-size:12.5px;color:#000;">19</div>
<div class="t" style="left:706.75px;top:494.95px;font-size:12.5px;color:#000;">48</div>
<div class="t" style="left:5.80px;top:514.95px;font-size:12.5px;color:#262626;">15</div>
<div class="t" style="left:47.60px;top:514.95px;font-size:12.5px;color:#000;letter-spacing:0.980px;">fev/15</div>
<div class="t" style="left:136.75px;top:514.95px;font-size:12.5px;color:#000;">33</div>
<div class="t" style="left:200.75px;top:514.95px;font-size:12.5px;color:#000;">10</div>
<div class="t" style="left:264.75px;top:514.95px;font-size:12.5px;color:#000;">26</div>
<div class="t" style="left:334.75px;top:514.95px;font-size:12.5px;color:#000;">64</div>
<div class="t" style="left:398.75px;top:514.95px;font-size:12.5px;color:#000;">34</div>
<div class="t" style="left:465.75px;top:514.95px;font-size:12.5px;color:#000;">55</div>
<div class="t" style="left:529.75px;top:514.95px;font-size:12.5px;color:#000;">27</div>
<div class="t" style="left:593.75px;top:514.95px;font-size:12.5px;color:#000;">18</div>
<div class="t" style="left:699.75px;top:514.95px;font-size:12.5px;color:#000;">100</div>
<div class="t" style="left:5.80px;top:534.95px;font-size:12.5px;color:#262626;">16</div>
<div class="t" style="left:42.30px;top:534.95px;font-size:12.5px;color:#000;letter-spacing:1.040px;">mar/15</div>
<div class="t" style="left:129.75px;top:534.95px;font-size:12.5px;color:#000;">125</div>
<div class="t" style="left:200.75px;top:534.95px;font-size:12.5px;color:#000;">42</div>
<div class="t" style="left:264.75px;top:534.95px;font-size:12.5px;color:#000;">18</div>
<div class="t" style="left:334.75px;top:534.95px;font-size:12.5px;color:#000;">44</div>
<div class="t" style="left:398.75px;top:534.95px;font-size:12.5px;color:#000;">48</div>
<div class="t" style="left:465.75px;top:534.95px;font-size:12.5px;color:#000;">73</div>
<div class="t" style="left:529.75px;top:534.95px;font-size:12.5px;color:#000;">18</div>
<div class="t" style="left:593.75px;top:534.95px;font-size:12.5px;color:#000;">27</div>
<div class="t" style="left:706.75px;top:534.95px;font-size:12.5px;color:#000;">57</div>
<div class="t" style="left:5.80px;top:554.95px;font-size:12.5px;color:#262626;">17</div>
<div class="t" style="left:47.10px;top:554.95px;font-size:12.5px;color:#000;letter-spacing:0.880px;">abr/15</div>
<div class="t" style="left:136.75px;top:554.95px;font-size:12.5px;color:#000;">50</div>
<div class="t" style="left:200.75px;top:554.95px;font-size:12.5px;color:#000;">40</div>
<div class="t" style="left:264.75px;top:554.95px;font-size:12.5px;color:#000;">56</div>
<div class="t" style="left:335.75px;top:554.95px;font-size:12.5px;color:#000;">11</div>
<div class="t" style="left:398.75px;top:554.95px;font-size:12.5px;color:#000;">14</div>
<div class="t" style="left:465.75px;top:554.95px;font-size:12.5px;color:#000;">74</div>
<div class="t" style="left:529.75px;top:554.95px;font-size:12.5px;color:#000;">40</div>
<div class="t" style="left:593.75px;top:554.95px;font-size:12.5px;color:#000;">40</div>
<div class="t" style="left:706.75px;top:554.95px;font-size:12.5px;color:#000;">50</div>
<div class="t" style="left:5.80px;top:574.95px;font-size:12.5px;color:#262626;">18</div>
<div class="t" style="left:43.40px;top:574.95px;font-size:12.5px;color:#000;letter-spacing:1.220px;">mai/15</div>
<div class="t" style="left:129.75px;top:574.95px;font-size:12.5px;color:#000;">124</div>
<div class="t" style="left:200.75px;top:574.95px;font-size:12.5px;color:#000;">20</div>
<div class="t" style="left:264.75px;top:574.95px;font-size:12.5px;color:#000;">33</div>
<div class="t" style="left:334.75px;top:574.95px;font-size:12.5px;color:#000;">65</div>
<div class="t" style="left:398.75px;top:574.95px;font-size:12.5px;color:#000;">26</div>
<div class="t" style="left:465.75px;top:574.95px;font-size:12.5px;color:#000;">25</div>
<div class="t" style="left:529.75px;top:574.95px;font-size:12.5px;color:#000;">19</div>
<div class="t" style="left:593.75px;top:574.95px;font-size:12.5px;color:#000;">17</div>
<div class="t" style="left:706.75px;top:574.95px;font-size:12.5px;color:#000;">83</div>
<div class="t" style="left:5.80px;top:594.95px;font-size:12.5px;color:#262626;">19</div>
<div class="t" style="left:47.20px;top:594.95px;font-size:12.5px;color:#000;letter-spacing:1.060px;">jun/15</div>
<div class="t" style="left:136.75px;top:594.95px;font-size:12.5px;color:#000;">30</div>
<div class="t" style="left:201.75px;top:594.95px;font-size:12.5px;color:#000;">11</div>
<div class="t" style="left:264.75px;top:594.95px;font-size:12.5px;color:#000;">18</div>
<div class="t" style="left:334.75px;top:594.95px;font-size:12.5px;color:#000;">17</div>
<div class="t" style="left:398.75px;top:594.95px;font-size:12.5px;color:#000;">33</div>
<div class="t" style="left:465.75px;top:594.95px;font-size:12.5px;color:#000;">83</div>
<div class="t" style="left:536.75px;top:594.95px;font-size:12.5px;color:#000;">0</div>
<div class="t" style="left:593.75px;top:594.95px;font-size:12.5px;color:#000;">35</div>
<div class="t" style="left:706.75px;top:594.95px;font-size:12.5px;color:#000;">58</div>
<svg style="position:absolute;left:211px;top:404px" width="6" height="6" viewBox="0 0 6 6"><path d="M0 0 H6 V6 Z" fill="#ff0000"/></svg>
<svg style="position:absolute;left:211px;top:464px" width="6" height="6" viewBox="0 0 6 6"><path d="M0 0 H6 V6 Z" fill="#ff0000"/></svg>
<svg style="position:absolute;left:0;top:0" width="779" height="595">
<line x1="302" y1="229.5" x2="204" y2="113" stroke="#ff0000" stroke-width="2.6" stroke-linecap="round"/>
<path d="M194.1 102.1 L215.9 112.5 L201.2 125 Z" fill="#ff0000"/>
</svg>
</body></html>
